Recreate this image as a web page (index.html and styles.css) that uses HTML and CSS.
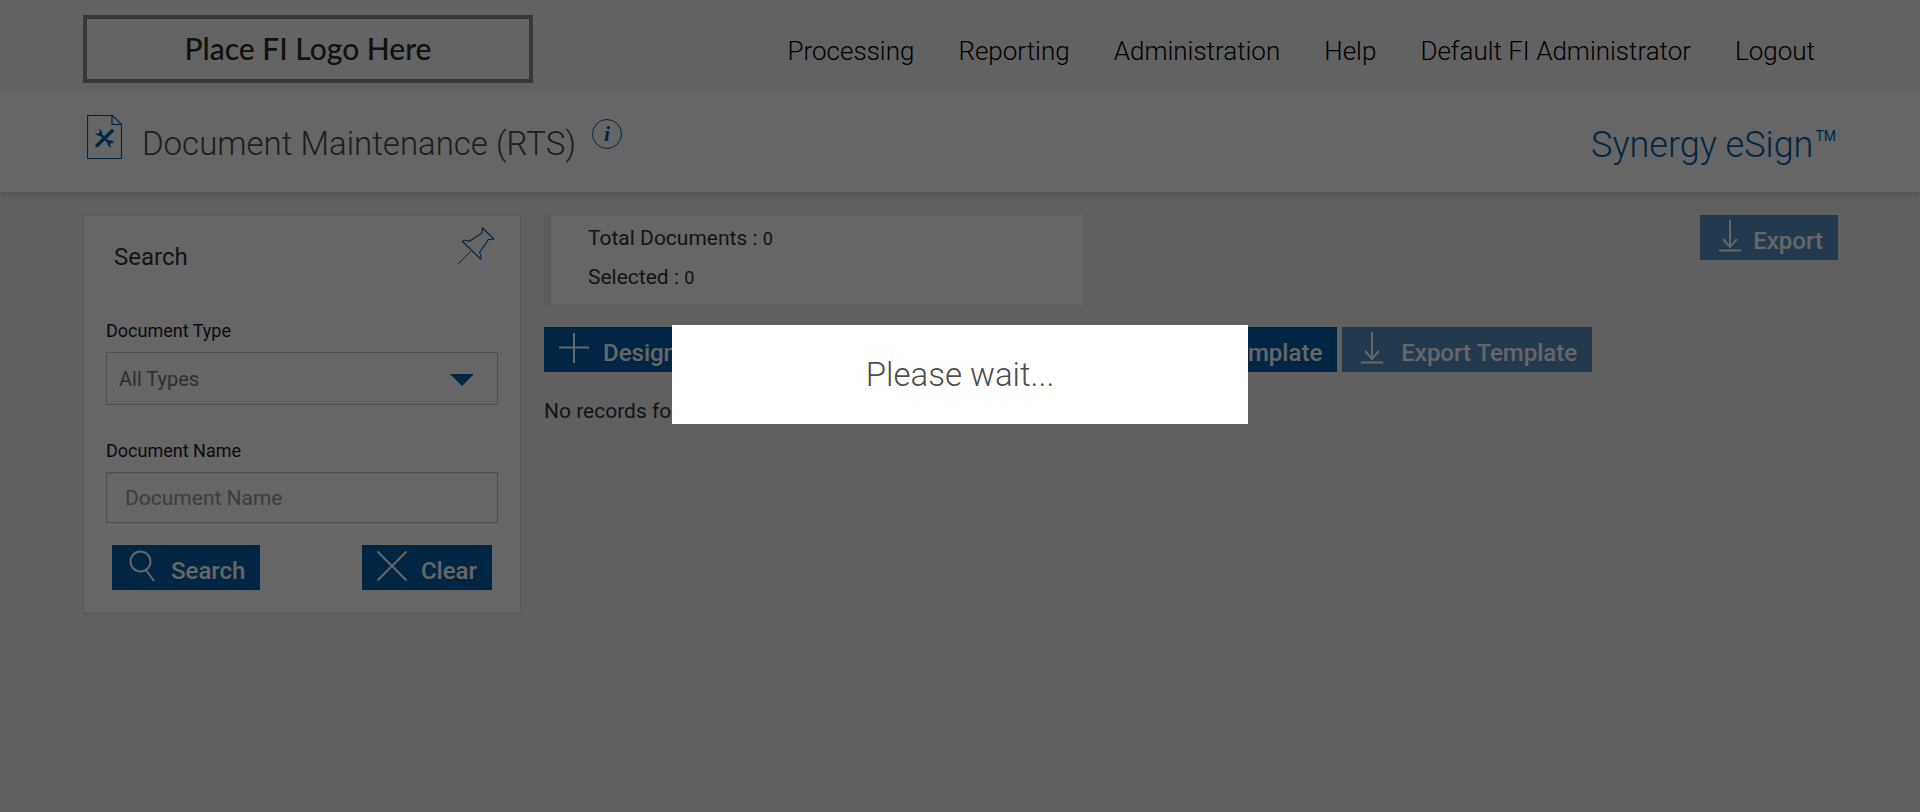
FILE: index.html
```html
<!DOCTYPE html>
<html lang="en">
<head>
    <meta charset="UTF-8">
    <meta name="viewport" content="width=device-width, initial-scale=1.0">
    <title>Document Maintenance (RTS)</title>
    <link rel="stylesheet" href="styles.css">
</head>
<body>
    <!-- Top navigation -->
    <header class="top-bar">
        <div class="logo">Place FI Logo Here</div>
        <nav class="main-nav">
            <a href="#">Processing</a>
            <a href="#">Reporting</a>
            <a href="#">Administration</a>
            <a href="#">Help</a>
            <a href="#">Default FI Administrator</a>
            <a href="#">Logout</a>
        </nav>
    </header>

    <!-- Page title -->
    <div class="title-bar">
        <svg class="doc-icon" width="36" height="45" viewBox="0 0 36 45">
            <path d="M.5 .5H25.500L34.500 9.500V43.500H.5Z M25 .5V9.500H34.500" fill="none" stroke="#005faa" stroke-width="1.200"/>
            <path d="M10 30.500L25 16" stroke="#005faa" stroke-width="3.600" stroke-linecap="round"/>
            <path d="M12 18L23.500 29" stroke="#005faa" stroke-width="2.600"/>
            <path d="M8.300 17.500a4 4 0 0 0 6.400 2.500a4 4 0 0 0-3.500-6l2 2.600-2.300 2.300z" fill="#005faa"/>
            <path d="M27.500 28.500a4 4 0 0 0-6.500-2.300a4 4 0 0 0 3.800 6l-2.200-2.500 2.300-2.200z" fill="#005faa"/>
        </svg>
        <h1>Document Maintenance (RTS)</h1>
        <button type="button" class="info-btn" aria-label="Information">i</button>
        <div class="brand">Synergy eSign<sup>TM</sup></div>
    </div>

    <div class="content">
        <!-- Search panel -->
        <form class="search-panel">
            <div class="panel-head">
                <h2>Search</h2>
                <svg class="pin-icon" width="38" height="38" viewBox="0 0 38 38" fill="none" stroke="#005faa" stroke-width="1.200">
                    <path d="M25.500 1L37 12L31.500 12.500L22.500 25.500Q25 29 23.500 32L5.500 14.500Q8 12 12 14.500L25 6Z"/>
                    <path d="M14.500 23.500L1 37" stroke-width="1"/>
                </svg>
            </div>
            <label for="documentType">Document Type</label>
            <div class="select-wrap">
                <select id="documentType" name="documentType">
                    <option>All Types</option>
                </select>
            </div>
            <label for="documentName">Document Name</label>
            <input type="text" id="documentName" name="documentName" placeholder="Document Name">
            <div class="panel-buttons">
                <button type="button" class="btn">
                    <svg width="30" height="32" viewBox="0 0 30 32"><circle cx="13.500" cy="11.500" r="10" /><path d="M19 20L27 31"/></svg>
                    Search
                </button>
                <button type="button" class="btn">
                    <svg width="30" height="32" viewBox="0 0 30 32"><path d="M.5 1.500L29.500 30.500M29.500 1.500L.5 30.500"/></svg>
                    Clear
                </button>
            </div>
        </form>

        <!-- Documents -->
        <main class="documents">
            <div class="summary-row">
                <div class="summary">
                    <p>Total Documents : <span>0</span></p>
                    <p>Selected : <span>0</span></p>
                </div>
                <button type="button" class="btn btn-light btn-export">
                    <svg width="30" height="32" viewBox="0 0 30 32"><path d="M15 0V27M8 19L15 27L22 19M4 30.500H26"/></svg>
                    Export
                </button>
            </div>
            <div class="toolbar">
                <button type="button" class="btn">
                    <svg width="30" height="32" viewBox="0 0 30 32"><path d="M15 1V31M0 15.500H30"/></svg>
                    Design
                </button>
                <button type="button" class="btn">
                    Template
                </button>
                <button type="button" class="btn btn-light">
                    <svg width="30" height="32" viewBox="0 0 30 32"><path d="M15 0V27M8 19L15 27L22 19M4 30.500H26"/></svg>
                    Export Template
                </button>
            </div>
            <p class="no-records">No records found</p>
        </main>
    </div>

    <!-- Loading overlay -->
    <div class="overlay">
        <div class="wait-box" role="status">Please wait...</div>
    </div>
</body>
</html>
```

FILE: styles.css
```css
* {
    box-sizing: border-box;
}

body {
    margin: 0;
    min-height: 100vh;
    background: #f0f0f0;
    color: #333;
    font-family: Roboto, "Liberation Sans", sans-serif;
    font-size: 21px;
}

h1, h2, p {
    margin: 0;
}

/* Top navigation */
.top-bar {
    display: flex;
    justify-content: space-between;
    align-items: center;
    height: 93px;
    padding: 4px 105px 0 83px;
    background: #f4f4f4;
}

.logo {
    width: 450px;
    height: 68px;
    border: 4px solid #8c8c8c;
    background: #fafafa;
    color: #2c2c2c;
    font-family: Lato, sans-serif;
    font-size: 30px;
    font-weight: 500;
    line-height: 58px;
    text-align: center;
}

.main-nav {
    display: flex;
    gap: 44px;
    padding-top: 4px;
}

.main-nav a {
    color: #000;
    font-size: 26px;
    font-weight: 300;
    line-height: 32px;
    text-decoration: none;
}

/* Page title */
.title-bar {
    display: flex;
    align-items: flex-start;
    height: 99px;
    padding: 22px 84px 0 87px;
    background: #fff;
    box-shadow: 0 5px 6px rgba(0, 0, 0, 0.1);
}

.title-bar h1 {
    margin: 9px 16px 0 19px;
    color: #4d4d4d;
    font-size: 33px;
    font-weight: 300;
    line-height: 40px;
}

.info-btn {
    width: 30px;
    height: 30px;
    margin-top: 4px;
    padding: 0;
    border: 1px solid #005faa;
    border-radius: 50%;
    background: none;
    color: #005faa;
    font-family: "Liberation Serif", serif;
    font-size: 22px;
    font-style: italic;
    font-weight: bold;
    line-height: 26px;
}

.brand {
    margin-top: 8px;
    margin-left: auto;
    color: #005faa;
    font-size: 36px;
    font-weight: 300;
    line-height: 44px;
}

.brand sup {
    margin-left: 2px;
    font-size: 14px;
    font-weight: 400;
    line-height: 14px;
    vertical-align: 16px;
}

.content {
    display: flex;
    align-items: flex-start;
    gap: 23px;
    padding: 23px 82px 0 83px;
}

/* Search panel */
.search-panel {
    display: flex;
    flex-direction: column;
    width: 438px;
    padding: 11px 22px 22px;
    border: 1px solid #e4e4e4;
    background: #fff;
    box-shadow: 0 1px 2px rgba(0, 0, 0, 0.1);
}

.panel-head {
    display: flex;
    justify-content: space-between;
    align-items: flex-start;
    height: 92px;
    padding: 0 3px 0 8px;
}

.panel-head h2 {
    margin-top: 16px;
    font-size: 24px;
    font-weight: 400;
    line-height: 28px;
}

.search-panel label {
    margin-bottom: 9px;
    color: #1a1a1a;
    font-size: 18px;
    line-height: 24px;
}

.select-wrap {
    position: relative;
    margin-bottom: 34px;
}

/* Drop-down arrow */
.select-wrap::after {
    content: "";
    position: absolute;
    top: 22px;
    right: 24px;
    border: 12px solid transparent;
    border-top-color: #005faa;
    border-bottom: 0;
    pointer-events: none;
}

.search-panel select,
.search-panel input {
    display: block;
    width: 100%;
    border: 1px solid #c4c4c4;
    border-radius: 0;
    background: #fff;
    color: #777;
    font-family: inherit;
}

.search-panel select {
    height: 53px;
    padding: 0 12px;
    font-size: 20px;
    appearance: none;
}

.search-panel input {
    height: 51px;
    padding: 0 18px;
    font-size: 21px;
    box-shadow: inset 0 1px 2px rgba(0, 0, 0, 0.1);
}

.search-panel input::placeholder {
    color: #999;
}

.panel-buttons {
    display: flex;
    justify-content: space-between;
    margin-top: 22px;
    padding: 0 6px;
}

/* Buttons */
.btn {
    display: flex;
    gap: 14px;
    height: 45px;
    padding: 5px 15px 0;
    border: 0;
    background: #005faa;
    color: #fff;
    font-family: inherit;
    font-size: 24px;
    font-weight: 500;
    line-height: 42px;
    white-space: nowrap;
}

.btn svg {
    flex: none;
    fill: none;
    stroke: #fff;
    stroke-width: 2;
}

.btn-light {
    background: #568fc2;
}

.btn-export {
    gap: 8px;
}

/* Documents */
.documents {
    flex: 1;
}

.summary-row {
    display: flex;
    justify-content: space-between;
    align-items: flex-start;
}

.summary {
    width: 539px;
    height: 90px;
    padding: 4px 37px;
    border-left: 7px solid #e4e4e4;
    background: #fff;
}

.summary p {
    line-height: 38px;
}

.summary span {
    font-size: 18px;
}

.toolbar {
    display: flex;
    gap: 5px;
    width: 81%;
    margin-top: 22px;
}

.toolbar .btn:nth-child(2) {
    flex: 1;
    justify-content: flex-end;
}

.toolbar .btn:first-child {
    width: 250px;
}

.no-records {
    margin-top: 26px;
    line-height: 26px;
}

/* Loading overlay */
.overlay {
    position: fixed;
    inset: 0;
    background: rgba(0, 0, 0, 0.6);
}

.wait-box {
    width: 30%;
    margin: 325px auto 0;
    padding: 30px;
    background: #fff;
    color: #4d4d4d;
    font-size: 33px;
    font-weight: 300;
    line-height: 39px;
    text-align: center;
}
```
